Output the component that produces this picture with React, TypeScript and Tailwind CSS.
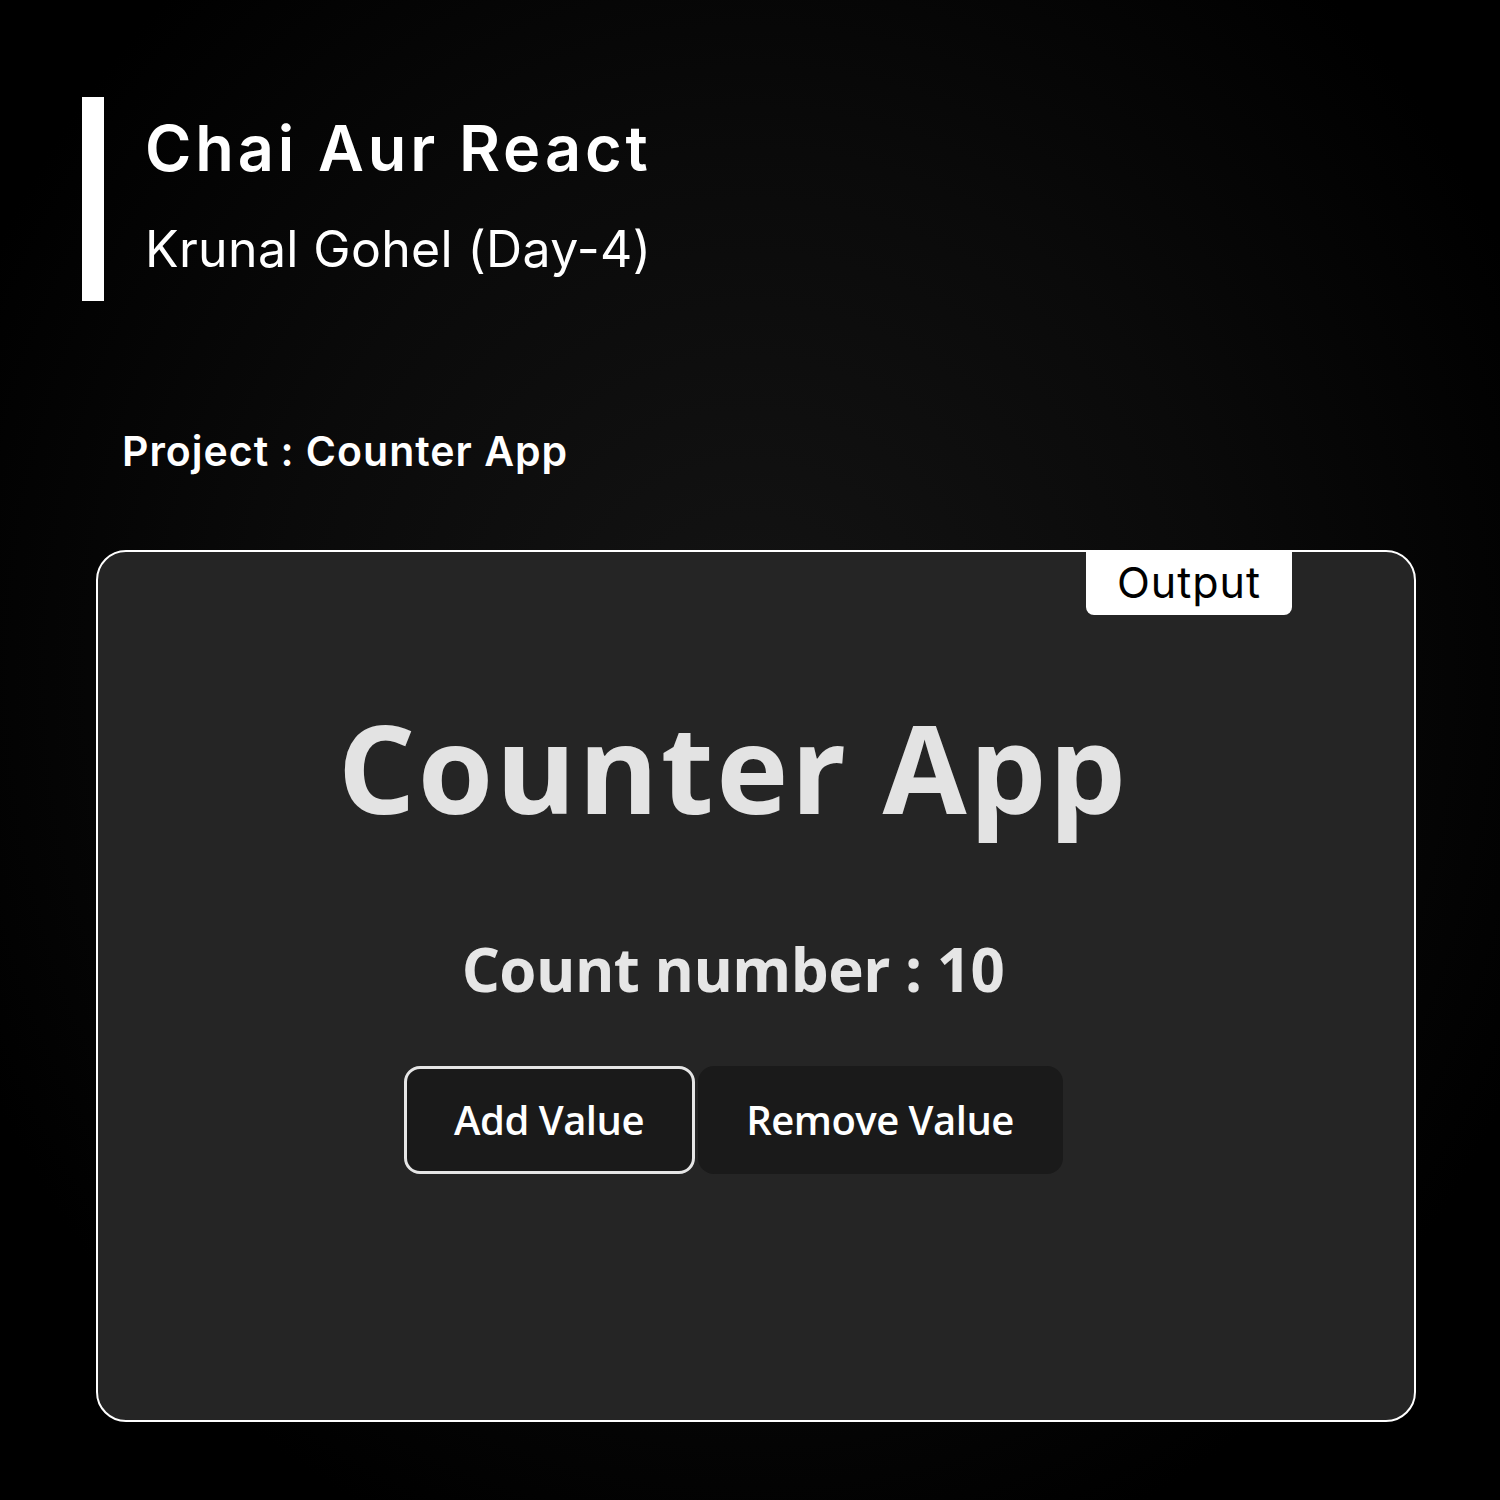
import React from "react";

export default function App() {
  return (
    <div className="w-[1500px] h-[1500px] bg-[radial-gradient(ellipse_at_50%_45%,#141414_0%,#0a0a0a_45%,#000000_80%)] relative overflow-hidden font-['Inter',sans-serif]">
      <div className="pt-[97px] pl-[82px] flex">
        <div className="w-[22px] h-[204px] bg-white" />
        <div className="pl-[41px] flex flex-col">
          <div className="text-white text-[63px] font-semibold leading-none mt-[20px] tracking-[3.9px]">Chai Aur React</div>
          <div className="text-white text-[50px] font-normal leading-none mt-[44px] tracking-[0.35px]">Krunal Gohel (Day-4)</div>
        </div>
      </div>
      <div className="pl-[122px] mt-[130px] text-white text-[41px] font-semibold leading-none tracking-[1px]">Project : Counter App</div>
      <div className="ml-[96px] mt-[78px] w-[1320px] h-[872px] rounded-[30px] border-2 border-white bg-[#252525] relative">
        <div className="absolute top-[-2px] left-[988px] w-[206px] h-[65px] bg-white rounded-b-[8px] flex items-center justify-center text-black text-[43px] leading-none tracking-[1px] font-['Inter',sans-serif]">Output</div>
        <div className="flex flex-col items-center pr-[46px] pt-[154px] font-['Open_Sans',sans-serif]">
          <div className="text-[#e3e3e3] text-[122px] font-bold leading-none tracking-[2.4px]">Counter App</div>
          <div className="text-[#e6e6e6] text-[60px] font-bold leading-none mt-[111px] tracking-[-0.5px]">Count number : 10</div>
          <div className="flex mt-[67px]">
            <button className="w-[291px] h-[108px] rounded-[16px] border-[3px] border-[#e6e6e6] bg-[#1a1a1a] text-white text-[40px] font-semibold tracking-[-0.5px]">Add Value</button>
            <button className="ml-[3px] w-[365px] h-[108px] rounded-[16px] bg-[#1a1a1a] text-white text-[40px] font-semibold tracking-[-0.5px]">Remove Value</button>
          </div>
        </div>
      </div>
    </div>
  );
}
